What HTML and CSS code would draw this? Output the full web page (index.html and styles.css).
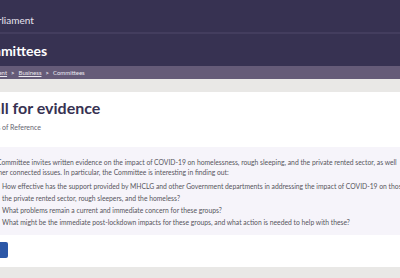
FILE: index.html
```html
<!DOCTYPE html>
<html lang="en">
<head>
    <meta charset="UTF-8">
    <meta name="viewport" content="width=device-width, initial-scale=1.0">
    <title>Committees - Call for evidence</title>
    <link rel="stylesheet" href="styles.css">
</head>
<body>
    <header class="site-header">
        <div class="site-name">Parliament</div>
    </header>
    <div class="section-bar">
        <h1 class="section-title">Committees</h1>
    </div>
    <nav class="breadcrumb">
        <a href="#">Parliament</a>
        <span class="sep">&gt;</span>
        <a href="#">Business</a>
        <span class="sep">&gt;</span>
        <span>Committees</span>
    </nav>

    <div class="page">
        <div class="card">
            <div class="card-head">
                <h2 class="card-title">Call for evidence</h2>
                <div class="card-sub">Terms of Reference</div>
            </div>
            <div class="terms">
                <p>The Committee invites written evidence on the impact of COVID-19 on homelessness, rough sleeping, and the private rented sector, as well<br>
                as other connected issues. In particular, the Committee is interesting in finding out:</p>
                <ul>
                    <li>How effective has the support provided by MHCLG and other Government departments in addressing the impact of COVID-19 on those in<br>
                    the private rented sector, rough sleepers, and the homeless?</li>
                    <li>What problems remain a current and immediate concern for these groups?</li>
                    <li>What might be the immediate post-lockdown impacts for these groups, and what action is needed to help with these?</li>
                </ul>
            </div>
            <div class="card-actions">
                <button class="btn">Go</button>
            </div>
        </div>
    </div>
</body>
</html>
```

FILE: styles.css
```css
body {
    font-family: Lato, "Noto Sans", sans-serif;
    margin: 0;
    padding: 0;
    background-color: #e9e8e6;
    overflow: hidden;
}

.site-header {
    height: 32px;
    background-color: #373252;
    border-bottom: 2px solid #433d5e;
    display: flex;
    align-items: center;
}

.site-name {
    margin-left: -13px;
    padding-top: 7px;
    font-size: 10px;
    color: #e6e3ee;
}

.section-bar {
    height: 32px;
    background-color: #373252;
    display: flex;
    align-items: center;
}

.section-title {
    margin: 0 0 0 -28px;
    font-size: 14px;
    font-weight: 700;
    color: #ffffff;
}

.breadcrumb {
    height: 13px;
    background-color: #655b78;
    display: flex;
    align-items: center;
    gap: 4px;
    font-size: 6px;
    color: #ebe8f0;
}

.breadcrumb a {
    color: #ebe8f0;
}

.breadcrumb a:first-child {
    margin-left: -21px;
}

.breadcrumb .sep {
    font-weight: 700;
}

.page {
    padding-top: 13px;
}

.card {
    background-color: #ffffff;
    margin-left: -18px;
    height: 175px;
}

.card-head {
    padding-top: 6px;
    height: 49px;
}

.card-title {
    margin: 0;
    font-size: 16px;
    line-height: 20px;
    font-weight: 700;
    color: #373252;
}

.card-sub {
    margin-top: 5px;
    font-size: 7px;
    line-height: 9px;
    color: #666370;
}

.terms {
    background-color: #f6f4fa;
    padding: 10px 0 7px 2px;
    font-size: 6.77px;
    color: #56545c;
    white-space: nowrap;
}

.terms p {
    margin: 0;
    line-height: 10px;
}

.terms ul {
    margin: 3px 0 0 0;
    padding-left: 18px;
    line-height: 12px;
}

.card-actions {
    display: flex;
    padding-top: 7px;
}

.btn {
    width: 26px;
    height: 16px;
    border: none;
    border-radius: 2px;
    background-color: #2b57a7;
    color: #ffffff;
    font-size: 7px;
    padding: 0;
}
```
